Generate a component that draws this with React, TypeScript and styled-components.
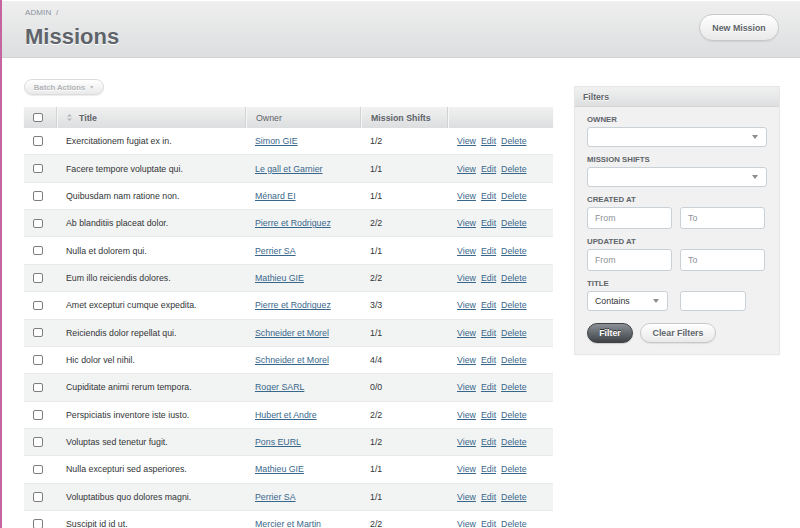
import React from "react";
import styled, { createGlobalStyle } from "styled-components";

const GlobalStyle = createGlobalStyle`
  html, body { margin: 0; padding: 0; background: #fff; height: 528px; overflow: hidden; }
  body { font-family: "Liberation Sans", Arial, Helvetica, sans-serif; color: #323537; }
  * { box-sizing: border-box; }
`;

const Page = styled.div`
  min-height: 528px;
  border-left: 2px solid #c4659f;
  display: flex;
  flex-direction: column;
`;

const TitleBar = styled.header`
  height: 58px;
  padding: 0 21px 0 23px;
  display: flex;
  justify-content: space-between;
  align-items: flex-start;
  background: linear-gradient(180deg, #efefef 0%, #dcdedf 100%);
  border-bottom: 1px solid #cfd1d2;
  box-shadow: inset 0 1px 0 #fff;
`;

const TitleBlock = styled.div`
  padding-top: 8px;
`;

const Breadcrumb = styled.div`
  font-size: 8px;
  line-height: 10px;
  color: #8a949e;
  letter-spacing: 0.1px;
`;

const PageTitle = styled.h2`
  margin: 7px 0 0;
  font-size: 22px;
  line-height: 24px;
  font-weight: bold;
  color: #5e6469;
  text-shadow: 0 1px 0 #fff;
`;

const PillButton = styled.button<{ $w: number; $h: number; $dark?: boolean; $muted?: boolean }>`
  width: ${(p) => p.$w}px;
  height: ${(p) => p.$h}px;
  padding: 0;
  border-radius: 200px;
  font-family: inherit;
  font-weight: bold;
  font-size: ${(p) => (p.$muted ? 7.7 : 8.8)}px;
  display: flex;
  align-items: center;
  justify-content: center;
  gap: 4px;
  cursor: pointer;
  color: ${(p) => (p.$dark ? "#fff" : p.$muted ? "#b0b3b6" : "#5e6469")};
  border: 1px solid ${(p) => (p.$dark ? "#3e4246" : p.$muted ? "#dcdcdc" : "#c8c8c8")};
  background: ${(p) =>
    p.$dark
      ? "linear-gradient(180deg, #8a9096 0%, #3f4347 100%)"
      : "linear-gradient(180deg, #ffffff 0%, #e9e9e9 100%)"};
  box-shadow: ${(p) =>
    p.$dark ? "0 1px 1px rgba(0,0,0,0.15)" : "0 1px 1px rgba(0,0,0,0.08), inset 0 1px 0 #fff"};
  text-shadow: ${(p) => (p.$dark ? "0 -1px 0 #333" : "0 1px 0 #fff")};
`;

const NewButton = styled(PillButton)`
  margin-top: 14px;
`;

const Content = styled.div`
  display: flex;
  gap: 22px;
  padding: 0 21px 0 22px;
`;

const Main = styled.main`
  width: 529px;
  padding-top: 21px;
  display: flex;
  flex-direction: column;
`;

const Caret = styled.span`
  font-size: 5px;
  line-height: 1;
`;

const Table = styled.div`
  margin-top: 12px;
  width: 529px;
`;

const cols = "33px 189px 115px 87px 105px";

const HeadRow = styled.div`
  display: grid;
  grid-template-columns: ${cols};
  height: 21px;
  background: linear-gradient(180deg, #f1f1f1 0%, #dcdedf 100%);
  box-shadow: 0 1px 1px rgba(0, 0, 0, 0.08);
`;

const Th = styled.div<{ $bold?: boolean }>`
  display: flex;
  align-items: center;
  gap: 7px;
  padding: 0 9px;
  font-size: 8.8px;
  font-weight: ${(p) => (p.$bold ? "bold" : "normal")};
  color: #5e6469;
  border-right: 1px solid #d0d2d3;
  border-left: 1px solid #f7f7f7;
  &:first-child { border-left: none; }
  &:last-child { border-right: none; }
`;

const Row = styled.div<{ $alt: boolean }>`
  display: grid;
  grid-template-columns: ${cols};
  height: 27.36px;
  background: ${(p) => (p.$alt ? "#f2f3f3" : "#fff")};
  border-bottom: 1px solid #e9eaeb;
`;

const Td = styled.div`
  display: flex;
  align-items: center;
  padding: 0 9px;
  font-size: 8.8px;
  color: #323537;
  white-space: nowrap;
  overflow: hidden;
`;

const Check = styled.span`
  display: inline-block;
  width: 9.5px;
  height: 9.5px;
  border: 1px solid #7d7d7d;
  border-radius: 2px;
  background: #fff;
`;

const Link = styled.a`
  color: #38678b;
  text-decoration: underline;
  font-size: 8.8px;
  margin-right: 5px;
  cursor: pointer;
`;

const Sidebar = styled.aside`
  width: 204px;
  margin-top: 29px;
  align-self: flex-start;
  background: #f1f1f1;
  box-shadow: 0 0 0 1px #e6e6e6, 0 1px 2px rgba(0, 0, 0, 0.08);
`;

const PanelHead = styled.h3`
  margin: 0;
  height: 20px;
  padding: 0 8px;
  display: flex;
  align-items: center;
  font-size: 8.7px;
  font-weight: bold;
  color: #5e6469;
  background: linear-gradient(180deg, #f1f1f1 0%, #dddfe0 100%);
  border-bottom: 1px solid #d4d6d7;
  text-shadow: 0 1px 0 #fff;
`;

const PanelBody = styled.form`
  padding: 8px 12px 11px;
`;

const Field = styled.div`
  margin-bottom: 8px;
`;

const Label = styled.label`
  display: block;
  height: 10px;
  line-height: 10px;
  margin-bottom: 2px;
  font-size: 7.8px;
  font-weight: bold;
  color: #5e6469;
  text-transform: uppercase;
`;

const SelectBox = styled.div<{ $w: number }>`
  width: ${(p) => p.$w}px;
  height: 20px;
  padding: 0 7px;
  display: flex;
  align-items: center;
  justify-content: space-between;
  background: #fff;
  border: 1px solid #c9d0d6;
  border-radius: 3px;
  font-size: 8.8px;
  color: #323537;
`;

const Arrow = styled.span`
  width: 0;
  height: 0;
  margin-right: 1px;
  border-left: 3px solid transparent;
  border-right: 3px solid transparent;
  border-top: 4px solid #8d8d8d;
`;

const InputRow = styled.div<{ $gap: number }>`
  display: flex;
  gap: ${(p) => p.$gap}px;
`;

const TextInput = styled.div<{ $w: number; $h: number }>`
  width: ${(p) => p.$w}px;
  height: ${(p) => p.$h}px;
  padding: 0 7px;
  display: flex;
  align-items: center;
  background: #fff;
  border: 1px solid #c9d0d6;
  border-radius: 3px;
  font-size: 8.8px;
  color: #8d9298;
`;

const Actions = styled.div`
  margin-top: 12px;
  display: flex;
  gap: 7px;
`;

const SortIcon = () => (
  <svg width="5" height="7" viewBox="0 0 5 7">
    <path d="M2.5 0 L5 2.6 H0 Z M2.5 7 L5 4.4 H0 Z" fill="#b3b6b8" />
  </svg>
);

const rows: [string, string, string][] = [
  ["Exercitationem fugiat ex in.", "Simon GIE", "1/2"],
  ["Facere tempore voluptate qui.", "Le gall et Garnier", "1/1"],
  ["Quibusdam nam ratione non.", "Ménard EI", "1/1"],
  ["Ab blanditiis placeat dolor.", "Pierre et Rodriguez", "2/2"],
  ["Nulla et dolorem qui.", "Perrier SA", "1/1"],
  ["Eum illo reiciendis dolores.", "Mathieu GIE", "2/2"],
  ["Amet excepturi cumque expedita.", "Pierre et Rodriguez", "3/3"],
  ["Reiciendis dolor repellat qui.", "Schneider et Morel", "1/1"],
  ["Hic dolor vel nihil.", "Schneider et Morel", "4/4"],
  ["Cupiditate animi rerum tempora.", "Roger SARL", "0/0"],
  ["Perspiciatis inventore iste iusto.", "Hubert et Andre", "2/2"],
  ["Voluptas sed tenetur fugit.", "Pons EURL", "1/2"],
  ["Nulla excepturi sed asperiores.", "Mathieu GIE", "1/1"],
  ["Voluptatibus quo dolores magni.", "Perrier SA", "1/1"],
  ["Suscipit id id ut.", "Mercier et Martin", "2/2"],
];

export default function App() {
  return (
    <>
      <GlobalStyle />
      <Page>
        <TitleBar>
          <TitleBlock>
            <Breadcrumb>ADMIN &nbsp;/</Breadcrumb>
            <PageTitle>Missions</PageTitle>
          </TitleBlock>
          <NewButton $w={80} $h={27}>New Mission</NewButton>
        </TitleBar>
        <Content>
          <Main>
            <PillButton $w={80} $h={16} $muted>
              Batch Actions <Caret>▼</Caret>
            </PillButton>
            <Table>
              <HeadRow>
                <Th>
                  <Check />
                </Th>
                <Th $bold>
                  <SortIcon />
                  Title
                </Th>
                <Th>Owner</Th>
                <Th $bold>Mission Shifts</Th>
                <Th />
              </HeadRow>
              {rows.map(([title, owner, shifts], i) => (
                <Row key={i} $alt={i % 2 === 1}>
                  <Td>
                    <Check />
                  </Td>
                  <Td>{title}</Td>
                  <Td>
                    <Link>{owner}</Link>
                  </Td>
                  <Td>{shifts}</Td>
                  <Td>
                    <Link>View</Link>
                    <Link>Edit</Link>
                    <Link>Delete</Link>
                  </Td>
                </Row>
              ))}
            </Table>
          </Main>
          <Sidebar>
            <PanelHead>Filters</PanelHead>
            <PanelBody>
              <Field>
                <Label>Owner</Label>
                <SelectBox $w={180}>
                  <span />
                  <Arrow />
                </SelectBox>
              </Field>
              <Field>
                <Label>Mission Shifts</Label>
                <SelectBox $w={180}>
                  <span />
                  <Arrow />
                </SelectBox>
              </Field>
              <Field>
                <Label>Created At</Label>
                <InputRow $gap={8}>
                  <TextInput $w={85} $h={22}>From</TextInput>
                  <TextInput $w={85} $h={22}>To</TextInput>
                </InputRow>
              </Field>
              <Field>
                <Label>Updated At</Label>
                <InputRow $gap={8}>
                  <TextInput $w={85} $h={22}>From</TextInput>
                  <TextInput $w={85} $h={22}>To</TextInput>
                </InputRow>
              </Field>
              <Field>
                <Label>Title</Label>
                <InputRow $gap={12}>
                  <SelectBox $w={81}>
                    <span>Contains</span>
                    <Arrow />
                  </SelectBox>
                  <TextInput $w={66} $h={20} />
                </InputRow>
              </Field>
              <Actions>
                <PillButton $w={46} $h={20} $dark type="button">
                  Filter
                </PillButton>
                <PillButton $w={76} $h={20} type="button">
                  Clear Filters
                </PillButton>
              </Actions>
            </PanelBody>
          </Sidebar>
        </Content>
      </Page>
    </>
  );
}
